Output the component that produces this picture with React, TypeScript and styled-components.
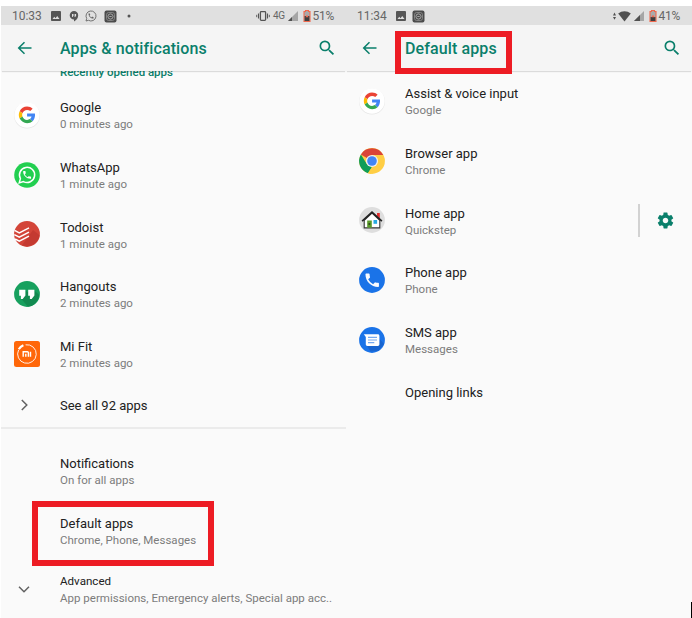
import React from "react";
import styled, { createGlobalStyle } from "styled-components";

const TEAL = "#0a7f6b";

const GlobalStyle = createGlobalStyle`
  * { box-sizing: border-box; }
  body { margin: 0; background: #fff; font-family: Roboto, "Liberation Sans", sans-serif; overflow: hidden; }
  svg { display: block; flex: none; }
`;

const Page = styled.div`
  display: flex;
  position: relative;
  width: 692px;
  height: 618px;
  padding: 6px 0 0 1px;
  overflow: hidden;
`;

const Screen = styled.section<{ $width: number }>`
  display: flex;
  flex-direction: column;
  flex: none;
  width: ${(p) => p.$width}px;
  height: 612px;
  background: #fafafa;
`;

const StatusBar = styled.div`
  display: flex;
  align-items: center;
  justify-content: space-between;
  flex: none;
  height: 19px;
  padding: 1px 9.5px 0 11px;
  background: #e0e0e0;
  color: #666;
  font-size: 12px;
  line-height: 18px;
`;

const StatusGroup = styled.div<{ $gap: number }>`
  display: flex;
  align-items: center;
  gap: ${(p) => p.$gap}px;
`;

const Clock = styled.span<{ $width: number }>`
  width: ${(p) => p.$width}px;
  letter-spacing: -0.05px;
`;

const Battery = styled.span`
  margin-left: 2px;
`;

const Percent = styled.span`
  width: 24px;
  margin-left: -1px;
  letter-spacing: -0.2px;
`;

const Network = styled.span`
  font-size: 10px;
  letter-spacing: -0.5px;
`;

const Header = styled.header<{ $end: number }>`
  display: flex;
  align-items: center;
  flex: none;
  height: 46px;
  padding: 0 ${(p) => p.$end}px 0 15px;
  background: #f5f5f5;
  box-shadow: 0 2px 1px -1px rgba(0, 0, 0, 0.12);
  position: relative;
  color: ${TEAL};
`;

const Heading = styled.h1`
  flex: 1;
  margin: 0 0 0 27px;
  padding-top: 2px;
  font-size: 16px;
  font-weight: 500;
  line-height: 20px;
  letter-spacing: 0.11px;
`;

const Category = styled.div`
  flex: none;
  height: 14px;
  padding-left: 59px;
  color: ${TEAL};
  font-size: 11.5px;
  font-weight: 500;
  line-height: 14px;
  letter-spacing: -0.02px;
  overflow: hidden;
`;

const CategoryLabel = styled.div`
  margin-top: -6px;
`;

const Row = styled.div<{ $height?: number }>`
  display: flex;
  align-items: center;
  flex: none;
  height: ${(p) => p.$height ?? 59.7}px;
`;

const IconSlot = styled.div<{ $arrow?: boolean }>`
  display: flex;
  justify-content: center;
  flex: none;
  width: ${(p) => (p.$arrow ? 46 : 52)}px;
  margin-right: ${(p) => (p.$arrow ? 13 : 7)}px;
`;

const Labels = styled.div<{ $double: boolean }>`
  flex: 1;
  min-width: 0;
  padding-top: ${(p) => (p.$double ? 2 : 0)}px;
  white-space: nowrap;
`;

const Title = styled.div<{ $small?: boolean }>`
  color: #212121;
  font-size: ${(p) => (p.$small ? 11.6 : 13)}px;
  line-height: 17px;
  letter-spacing: 0;
`;

const Summary = styled.div`
  color: #7c7c7c;
  font-size: 11.5px;
  line-height: 16px;
  letter-spacing: 0.01px;
`;

const Divider = styled.div`
  flex: none;
  height: 2px;
  margin-bottom: 12px;
  background: #ebebeb;
`;

const SettingsAction = styled.div`
  display: flex;
  align-items: center;
  justify-content: center;
  width: 54px;
  height: 33px;
  padding-right: 2px;
  border-left: 2px solid #d2d2d2;
  color: ${TEAL};
`;

const Highlight = styled.div<{ $x: number; $y: number; $w: number; $h: number }>`
  position: absolute;
  left: ${(p) => p.$x}px;
  top: ${(p) => p.$y}px;
  width: ${(p) => p.$w}px;
  height: ${(p) => p.$h}px;
  border: 6px solid #ed1c24;
`;

const Caret = styled.div`
  position: absolute;
  right: 0;
  bottom: 0;
  width: 1px;
  height: 16px;
  background: #000;
`;

const BackIcon = () => (
  <svg width="17" height="16" viewBox="0 0 17 16" fill="none" stroke="currentColor" strokeWidth="1.5">
    <path d="M15.5 8H3M8.5 2.2 2.7 8l5.8 5.8" />
  </svg>
);

const SearchIcon = () => (
  <svg width="20" height="20" viewBox="0 0 24 24" fill="currentColor">
    <path d="M15.5 14h-.79l-.28-.27A6.47 6.47 0 0 0 16 9.5 6.5 6.5 0 1 0 9.5 16c1.61 0 3.09-.59 4.23-1.57l.27.28v.79l5 4.99L20.49 19l-4.99-5zm-6 0C7.01 14 5 11.99 5 9.5S7.01 5 9.5 5 14 7.01 14 9.5 11.99 14 9.5 14z" />
  </svg>
);

const ImageIcon = () => (
  <svg width="12" height="12" viewBox="0 0 24 24" fill="#555">
    <path d="M22 20V4a2 2 0 0 0-2-2H4a2 2 0 0 0-2 2v16c0 1.1.9 2 2 2h16a2 2 0 0 0 2-2zM8.5 13.5l2.5 3 3.5-4.5 4.5 6H5z" />
  </svg>
);

const HangoutsStatusIcon = () => (
  <svg width="10" height="12" viewBox="0 0 10 12">
    <path d="M5 1a4.2 4.2 0 0 1 4.2 4.2C9.2 8 7.5 10 5 11.5V9.6A4.3 4.3 0 0 1 5 1z" fill="#555" />
    <path d="M3 4h1.5v1.7L3.6 7H3zm2.6 0h1.5v1.7L6.2 7h-.6z" fill="#e0e0e0" />
  </svg>
);

const handset =
  "M20 15.5c-1.25 0-2.45-.2-3.57-.57a1.02 1.02 0 0 0-1.02.24l-2.2 2.2a15.05 15.05 0 0 1-6.59-6.58l2.2-2.21c.28-.27.36-.66.25-1.01A11.36 11.36 0 0 1 8.5 4c0-.55-.45-1-1-1H4c-.55 0-1 .45-1 1 0 9.39 7.61 17 17 17 .55 0 1-.45 1-1v-3.5c0-.55-.45-1-1-1z";

const WhatsAppStatusIcon = () => (
  <svg width="12" height="12" viewBox="0 0 24 24">
    <path d="M2 22l1.4-5A10 10 0 1 1 7 20.6z" fill="none" stroke="#666" strokeWidth="1.8" />
    <path d={handset} fill="#666" transform="translate(5.3 5.2) scale(.56)" />
  </svg>
);

const CameraStatusIcon = () => (
  <svg width="13" height="13" viewBox="0 0 13 13">
    <rect x=".5" y=".5" width="12" height="12" rx="2" fill="#4c4c4c" />
    <rect x="2.5" y="2.5" width="8" height="8" rx="2.2" fill="none" stroke="#999" strokeWidth=".7" />
    <circle cx="6.5" cy="6.5" r="2.6" fill="none" stroke="#bbb" strokeWidth=".8" />
    <path d="M5.3 6.5h2.4" stroke="#bbb" strokeWidth=".8" />
  </svg>
);

const DotIcon = () => (
  <svg width="10" height="4" viewBox="0 0 10 4">
    <circle cx="6" cy="2" r="1.5" fill="#555" />
  </svg>
);

const VibrateIcon = () => (
  <svg width="14" height="12" viewBox="0 0 14 12" fill="none" stroke="#555">
    <rect x="4.4" y="1.6" width="5.2" height="8.8" rx=".8" strokeWidth="1.3" />
    <path d="M2.5 3.5v5M11.5 3.5v5" strokeWidth="1.1" />
    <path d="M.7 4.8v2.4M13.3 4.8v2.4" strokeWidth=".9" />
  </svg>
);

const SignalIcon = ({ level }: { level: number }) => (
  <svg width="10" height="10" viewBox="0 0 10 10">
    <path d="M0 10 10 0v10z" fill="#a6a6a6" />
    <path d={`M0 10 ${level} ${10 - level}V10z`} fill="#505050" />
  </svg>
);

const BatteryIcon = ({ level }: { level: number }) => (
  <svg width="8" height="12" viewBox="0 0 8 12">
    <path d="M2.5.5h3v1H7v10H1v-10h1.5z" fill="#aaa" stroke="#f1694e" strokeWidth="1.1" />
    <path d={`M1.6 ${11 - level}h4.8V11H1.6z`} fill="#3f3f3f" />
    <path d="M2.4 7.2h3.2L4 4.7z" fill="#f1694e" />
  </svg>
);

const WifiIcon = () => (
  <svg width="18" height="11" viewBox="0 0 18 11" fill="#505050">
    <path d="M0 4.4 1.5 1.6 3 4.4zM0 6h3L1.5 8.8z" />
    <path d="M5.2 2.6a10 10 0 0 1 12.6 0L11.5 10.4z" />
  </svg>
);

const GoogleIcon = () => (
  <svg width="28" height="28" viewBox="0 0 28 28">
    <circle cx="14" cy="14.6" r="13" fill="#e6e6e6" />
    <circle cx="14" cy="14" r="12.7" fill="#fff" />
    <g transform="translate(5.8 5.6) scale(.345)">
      <path fill="#ea4335" d="M24 9.5c3.54 0 6.71 1.22 9.21 3.6l6.85-6.85C35.9 2.38 30.47 0 24 0 14.62 0 6.51 5.38 2.56 13.22l7.98 6.19C12.43 13.72 17.74 9.5 24 9.5z" />
      <path fill="#4285f4" d="M46.98 24.55c0-1.57-.15-3.09-.38-4.55H24v9.02h12.94c-.58 2.96-2.26 5.48-4.78 7.18l7.73 6c4.51-4.18 7.09-10.36 7.09-17.65z" />
      <path fill="#fbbc05" d="M10.53 28.59A14.5 14.5 0 0 1 9.77 24c0-1.6.27-3.14.76-4.59l-7.98-6.19A23.9 23.9 0 0 0 0 24c0 3.88.92 7.54 2.56 10.78z" />
      <path fill="#34a853" d="M24 48c6.48 0 11.93-2.13 15.89-5.81l-7.73-6c-2.15 1.45-4.92 2.3-8.16 2.3-6.26 0-11.57-4.22-13.47-9.91l-7.98 6.19C6.51 42.62 14.62 48 24 48z" />
    </g>
  </svg>
);

const WhatsAppIcon = () => (
  <svg width="28" height="28" viewBox="0 0 28 28">
    <circle cx="14" cy="14" r="12.8" fill="#22cf50" />
    <path d="M6.2 21.9l1.2-4.3A7.6 7.6 0 1 1 10.4 20.6z" fill="none" stroke="#fff" strokeWidth="1.5" />
    <path d={handset} fill="#fff" transform="translate(8.8 8.6) scale(.44)" />
  </svg>
);

const TodoistIcon = () => (
  <svg width="28" height="28" viewBox="0 0 28 28">
    <circle cx="14" cy="14" r="12.9" fill="#d34539" />
    <path d="M9 25.2 20 10l6.6 5.3A12.9 12.9 0 0 1 9 25.2z" fill="#c43a31" />
    <path d="M1.6 10.4l4.7 2.5 9.7-5M1.3 14.6l5 2.5 9.7-5M2.1 19l4.2 2.2 9.7-5" fill="none" stroke="#fff" strokeWidth="1.5" />
  </svg>
);

const HangoutsIcon = () => (
  <svg width="28" height="28" viewBox="0 0 28 28">
    <circle cx="14" cy="14" r="12.9" fill="#17a05e" />
    <path d="M8 18.6l4.5-8.2 2 1.6 6.9-1.6 4.8 4.6A12.9 12.9 0 0 1 15 26.8z" fill="#128a50" />
    <path d="M6.2 9.8h6.2v5.6L9.7 19H7.9v-3.3H6.2zM15.2 9.8h6.2v5.6L18.7 19h-1.8v-3.3h-1.7z" fill="#fff" />
  </svg>
);

const MiFitIcon = () => (
  <svg width="28" height="28" viewBox="0 0 28 28">
    <rect x="1" y="1" width="26" height="26" rx="2.5" fill="#ff6709" />
    <path d="M12.6 4.8a9.3 9.3 0 1 1-7 5.1" fill="none" stroke="#fff" strokeWidth=".9" />
    <path d="M5.8 9.2a9.3 9.3 0 0 1 4.6-4" fill="none" stroke="#fff" strokeWidth="2.2" />
    <path d="M10.2 16.8v-5h4.2c.8 0 1 .5 1 1v4M12.8 13.7v3.1M17.5 11.8v5" fill="none" stroke="#fff" strokeWidth="1.4" />
  </svg>
);

const ChromeIcon = () => (
  <svg width="28" height="28" viewBox="0 0 28 28">
    <circle cx="14" cy="14" r="12.9" fill="#ffce44" />
    <path d="M14 14 2.9 7.4A12.9 12.9 0 0 1 25.3 8H14z" fill="#da4437" />
    <path d="M2.9 7.4 8.8 17l5.2 3-4 6.3A12.9 12.9 0 0 1 2.9 7.4z" fill="#0f9d58" />
    <path d="M13 26.9 19.2 17 14 19.9 9.9 26.2a13 13 0 0 0 3.1.7z" fill="#ffce44" />
    <circle cx="14" cy="14" r="6.1" fill="#f1f1f1" />
    <circle cx="14" cy="14" r="4.8" fill="#4285f4" />
  </svg>
);

const HouseIcon = () => (
  <svg width="28" height="28" viewBox="0 0 28 28">
    <circle cx="14" cy="14" r="12.9" fill="#dedede" />
    <path d="M19 7h2.8v5.5L19 9.5z" fill="#e32c2c" />
    <path d="M6.2 14.3 14 7l7.8 7.3v7.6H6.2z" fill="#fff" stroke="#353535" strokeWidth="1.1" />
    <path d="M4.1 15.2 14 6.1 23.9 15.2" fill="none" stroke="#222" strokeWidth="1.6" />
    <path d="M9.2 14.5h4.6v7.2H9.2z" fill="#5b9b2b" />
    <path d="M10.5 17h1.7v2h-1.7z" fill="#314d1c" />
    <path d="M15.5 14h3.6v3.8h-3.6z" fill="#27aae1" />
  </svg>
);

const PhoneIcon = () => (
  <svg width="28" height="28" viewBox="0 0 28 28">
    <circle cx="14" cy="14" r="12.9" fill="#1a73e8" />
    <path d={handset} fill="#f8fbff" transform="translate(5.2 5.2) scale(.75)" />
  </svg>
);

const MessagesIcon = () => (
  <svg width="28" height="28" viewBox="0 0 28 28">
    <circle cx="14" cy="14" r="12.9" fill="#1a73e8" />
    <path d="M9 19.8h12l.5-7 4.5 5.2-5.5 6.7-8 .7z" fill="#1864cf" />
    <path d="M5.8 8.3h14c.9 0 1.6.7 1.6 1.6v8.4c0 .9-.7 1.6-1.6 1.6H9.4c-.9 0-1.6-.7-1.6-1.6v-7.4z" fill="#fff" />
    <path d="M10 11.3h9M10 14h9M10 16.7h6.3" stroke="#76a9f0" strokeWidth="1.2" />
  </svg>
);

const Chevron = ({ down = false }: { down?: boolean }) => (
  <svg width="14" height="14" viewBox="0 0 14 14" fill="none" stroke="#626262" strokeWidth="1.5">
    <path d={down ? "M2 4.8 7 9.8 12 4.8" : "M4.8 2 9.8 7 4.8 12"} />
  </svg>
);

const GearIcon = () => (
  <svg width="19" height="19" viewBox="0 0 24 24" fill="currentColor">
    <path d="M19.43 12.98c.04-.32.07-.64.07-.98s-.03-.66-.07-.98l2.11-1.65c.19-.15.24-.42.12-.64l-2-3.46c-.12-.22-.39-.3-.61-.22l-2.49 1c-.52-.4-1.08-.73-1.69-.98l-.38-2.65A.49.49 0 0 0 14 2h-4c-.25 0-.46.18-.49.42l-.38 2.65c-.61.25-1.17.59-1.69.98l-2.49-1c-.23-.09-.49 0-.61.22l-2 3.46c-.13.22-.07.49.12.64l2.11 1.65c-.04.32-.07.65-.07.98s.03.66.07.98l-2.11 1.65c-.19.15-.24.42-.12.64l2 3.46c.12.22.39.3.61.22l2.49-1c.52.4 1.08.73 1.69.98l.38 2.65c.03.24.24.42.49.42h4c.25 0 .46-.18.49-.42l.38-2.65c.61-.25 1.17-.59 1.69-.98l2.49 1c.23.09.49 0 .61-.22l2-3.46c.12-.22.07-.49-.12-.64zM12 15.5c-1.93 0-3.5-1.57-3.5-3.5s1.57-3.5 3.5-3.5 3.5 1.57 3.5 3.5-1.57 3.5-3.5 3.5z" />
  </svg>
);

type Item = { title: string; summary?: string; icon?: React.ReactNode; settings?: boolean };

const recentApps: Item[] = [
  { title: "Google", summary: "0 minutes ago", icon: <GoogleIcon /> },
  { title: "WhatsApp", summary: "1 minute ago", icon: <WhatsAppIcon /> },
  { title: "Todoist", summary: "1 minute ago", icon: <TodoistIcon /> },
  { title: "Hangouts", summary: "2 minutes ago", icon: <HangoutsIcon /> },
  { title: "Mi Fit", summary: "2 minutes ago", icon: <MiFitIcon /> },
];

const defaultApps: Item[] = [
  { title: "Assist & voice input", summary: "Google", icon: <GoogleIcon /> },
  { title: "Browser app", summary: "Chrome", icon: <ChromeIcon /> },
  { title: "Home app", summary: "Quickstep", icon: <HouseIcon />, settings: true },
  { title: "Phone app", summary: "Phone", icon: <PhoneIcon /> },
  { title: "SMS app", summary: "Messages", icon: <MessagesIcon /> },
];

type PreferenceProps = Item & { height?: number; arrow?: boolean; small?: boolean };

const Preference = ({ title, summary, icon, settings, height, arrow, small }: PreferenceProps) => (
  <Row $height={height}>
    <IconSlot $arrow={arrow}>{icon}</IconSlot>
    <Labels $double={Boolean(summary)}>
      <Title $small={small}>{title}</Title>
      {summary && <Summary>{summary}</Summary>}
    </Labels>
    {settings && (
      <SettingsAction>
        <GearIcon />
      </SettingsAction>
    )}
  </Row>
);

const AppBar = ({ title, end }: { title: string; end: number }) => (
  <Header $end={end}>
    <BackIcon />
    <Heading>{title}</Heading>
    <SearchIcon />
  </Header>
);

export default function App() {
  return (
    <>
      <GlobalStyle />
      <Page>
        <Screen $width={345}>
          <StatusBar>
            <StatusGroup $gap={6.5}>
              <Clock $width={31.5}>10:33</Clock>
              <ImageIcon />
              <HangoutsStatusIcon />
              <WhatsAppStatusIcon />
              <CameraStatusIcon />
              <DotIcon />
            </StatusGroup>
            <StatusGroup $gap={3}>
              <VibrateIcon />
              <Network>4G</Network>
              <SignalIcon level={4} />
              <Battery>
                <BatteryIcon level={5} />
              </Battery>
              <Percent>51%</Percent>
            </StatusGroup>
          </StatusBar>
          <AppBar title="Apps & notifications" end={9} />
          <Category>
            <CategoryLabel>Recently opened apps</CategoryLabel>
          </Category>
          {recentApps.map((app) => (
            <Preference key={app.title} {...app} />
          ))}
          <Preference title="See all 92 apps" icon={<Chevron />} height={43.5} arrow />
          <Divider />
          <Preference title="Notifications" summary="On for all apps" />
          <Preference title="Default apps" summary="Chrome, Phone, Messages" />
          <Preference
            title="Advanced"
            summary="App permissions, Emergency alerts, Special app acc.."
            icon={<Chevron down />}
            height={57}
            arrow
            small
          />
        </Screen>
        <Screen $width={346}>
          <StatusBar>
            <StatusGroup $gap={5}>
              <Clock $width={33}>11:34</Clock>
              <ImageIcon />
              <CameraStatusIcon />
            </StatusGroup>
            <StatusGroup $gap={3}>
              <WifiIcon />
              <SignalIcon level={6} />
              <Battery>
                <BatteryIcon level={4} />
              </Battery>
              <Percent>41%</Percent>
            </StatusGroup>
          </StatusBar>
          <AppBar title="Default apps" end={10} />
          {defaultApps.map((app) => (
            <Preference key={app.title} {...app} />
          ))}
          <Preference title="Opening links" height={46} />
        </Screen>
        <Highlight $x={32} $y={501} $w={182} $h={65} />
        <Highlight $x={395} $y={31} $w={117} $h={43} />
        <Caret />
      </Page>
    </>
  );
}
